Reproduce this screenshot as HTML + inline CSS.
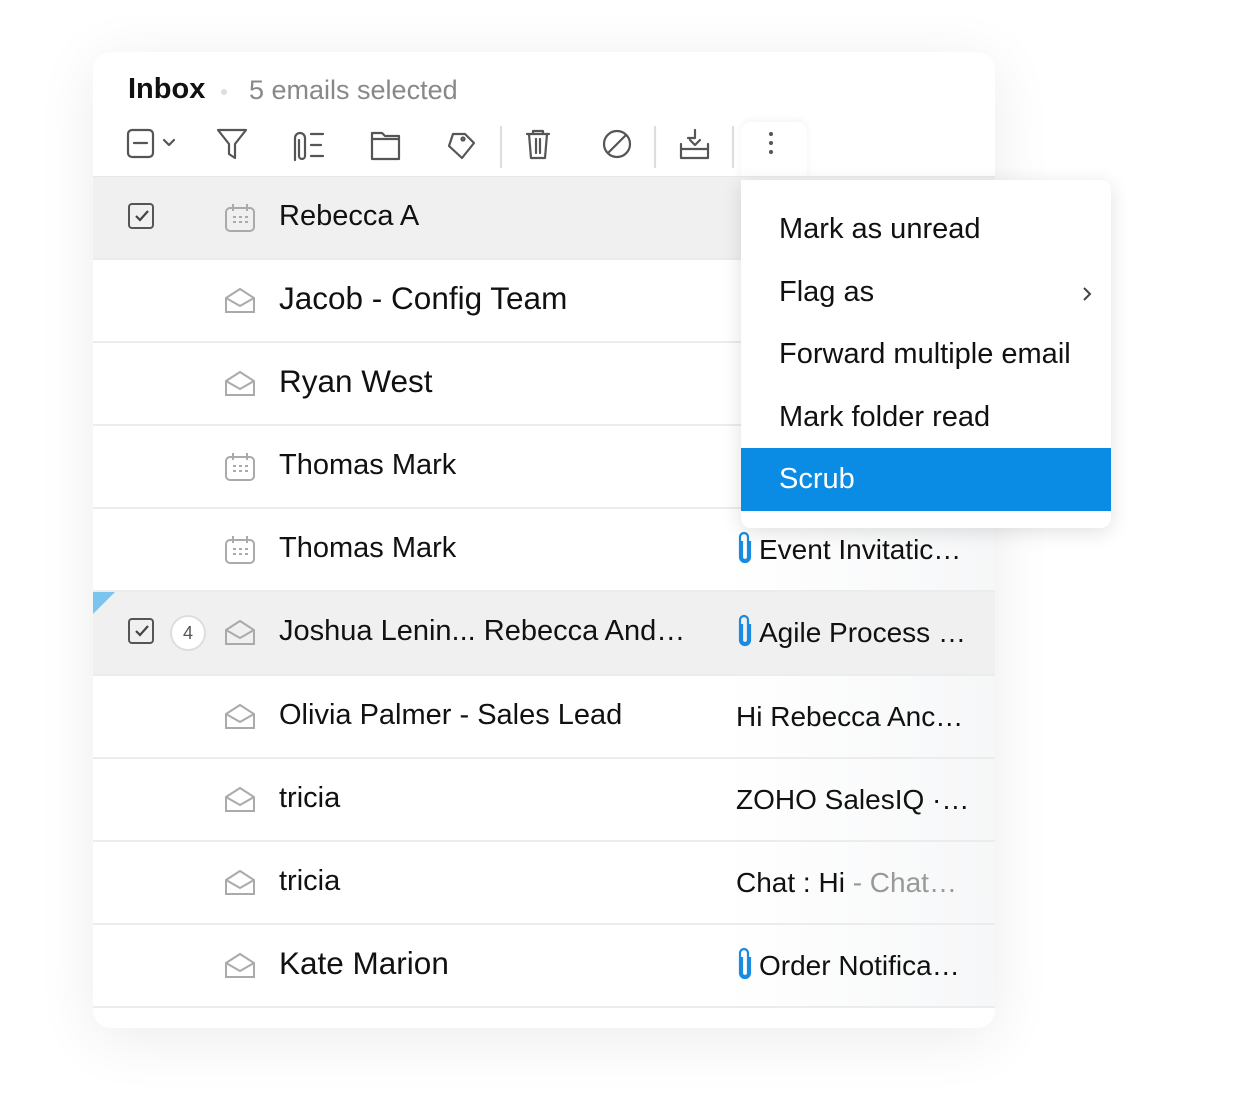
<!DOCTYPE html>
<html><head><meta charset="utf-8"><style>
*{margin:0;padding:0;box-sizing:border-box}
body{width:1237px;height:1096px;background:#fff;font-family:"Liberation Sans",sans-serif;position:relative;overflow:hidden}
.card{position:absolute;left:93px;top:52px;width:902px;height:976px;background:#fff;border-radius:18px;box-shadow:0 10px 60px rgba(0,0,0,.08);overflow:hidden}
.a{position:absolute}
.row{position:absolute;left:0;width:902px;height:83px;border-bottom:2px solid #ececec;background:linear-gradient(90deg,#fff 70%,#f6f7f8)}
.row.sel{background:#f0f0f0}
.name{position:absolute;left:186px;top:23px;font-size:29px;color:#111;white-space:nowrap}
.subj{position:absolute;left:643px;top:25px;font-size:28px;color:#111;white-space:nowrap}
.ic{position:absolute;left:131px;top:26px}
.cb{position:absolute;left:35px;top:26px;width:26px;height:26px;border:2px solid #555;border-radius:4px}
.menu{position:absolute;left:741px;top:180px;width:370px;height:348px;background:#fff;border-radius:0 10px 10px 10px;box-shadow:0 4px 20px rgba(0,0,0,.12)}
.mi{position:absolute;left:38px;font-size:29px;color:#111}
.big{font-size:31.5px;top:20px}
</style></head><body>
<div class="card">
<div class="a" style="left:35px;top:21px;font-size:29px;font-weight:bold;color:#111">Inbox</div>
<div class="a" style="left:128px;top:37px;width:6px;height:6px;border-radius:3px;background:#ddd"></div>
<div class="a" style="left:156px;top:23px;font-size:27px;color:#888">5 emails selected</div>
<svg class="a" style="left:30px;top:72px" width="700" height="44" fill="none" stroke="#555" stroke-width="2.2" stroke-linecap="round" stroke-linejoin="round">
<rect x="5" y="6" width="25" height="27" rx="4"/><path d="M11 19h13M41 16l5 5 5-5"/>
<path d="M95 6h28l-11 14v14l-6-4v-10z"/>
<path d="M172 36V14a5 5 0 0 1 10 0v18a3 3 0 0 1-6 0V16M188 10h12M188 21h10M188 32h12"/>
<path d="M249 9h10l3 3h14v23h-27z M249 15h27"/>
<path d="M330 10h12l9 9v0l-12 15-13-12z"/><circle cx="340" cy="15" r="1.5"/>
<path d="M378 3v40" stroke="#ddd"/>
<path d="M404 10h22M410 10v-3h10v3M406 10l2 24h14l2-24M413 15v14M417 15v14"/>
<circle cx="494" cy="20" r="13"/><path d="M485 29l18-18"/>
<path d="M532 3v40" stroke="#ddd"/>
<path d="M558 20v14h27v-14M558 25h27M565 14h7v-8M567 16l5 5 5-5" />
<path d="M610 3v40" stroke="#ddd"/>
</svg>
<div class="a" style="left:648px;top:70px;width:66px;height:60px;background:#fff;border-radius:10px 10px 0 0;box-shadow:0 -2px 8px rgba(0,0,0,.05)"></div>
<div class="a" style="left:676px;top:80px;width:4px;height:4px;background:#555;border-radius:2px;box-shadow:0 9px 0 #555,0 18px 0 #555"></div>
<div class="a" style="left:0;top:124px;width:902px;height:2px;background:#e8e8e8"></div>

<div class="row sel" style="top:125px"><div class="cb"></div><svg class="a" style="left:41px;top:32px" width="16" height="14"><path d="M2 7l4 4 8-9" stroke="#444" stroke-width="2.2" fill="none"/></svg>
<svg class="ic" width="32" height="30" fill="none" stroke="#aaa" stroke-width="2"><rect x="2" y="5" width="28" height="23" rx="4"/><path d="M9 1v7M23 1v7M9 14h3M15 14h3M21 14h3M9 19h3M15 19h3M21 19h3"/></svg><div class="name">Rebecca A</div></div>

<div class="row" style="top:208px"><svg class="ic" width="32" height="30" fill="none" stroke="#aaa" stroke-width="2"><path d="M2 12L16 3l14 9v14H2z M2 12l14 8 14-8"/></svg><div class="name big">Jacob - Config Team</div></div>
<div class="row" style="top:291px"><svg class="ic" width="32" height="30" fill="none" stroke="#aaa" stroke-width="2"><path d="M2 12L16 3l14 9v14H2z M2 12l14 8 14-8"/></svg><div class="name big">Ryan West</div></div>
<div class="row" style="top:374px"><svg class="ic" width="32" height="30" fill="none" stroke="#aaa" stroke-width="2"><rect x="2" y="5" width="28" height="23" rx="4"/><path d="M9 1v7M23 1v7M9 14h3M15 14h3M21 14h3M9 19h3M15 19h3M21 19h3"/></svg><div class="name">Thomas Mark</div></div>
<div class="row" style="top:457px"><svg class="ic" width="32" height="30" fill="none" stroke="#aaa" stroke-width="2"><rect x="2" y="5" width="28" height="23" rx="4"/><path d="M9 1v7M23 1v7M9 14h3M15 14h3M21 14h3M9 19h3M15 19h3M21 19h3"/></svg><div class="name">Thomas Mark</div>
<svg class="a" style="left:644px;top:22px" width="16" height="34" fill="none" stroke="#1a8be0" stroke-width="2.2"><path d="M5 10v16a3 3 0 0 0 6 0V6a4 4 0 0 0-8 0v20a5 5 0 0 0 10 0V10"/></svg><div class="subj" style="left:666px">Event Invitatic…</div></div>

<div class="row sel" style="top:540px;height:84px"><div class="a" style="left:0;top:0;width:0;height:0;border-top:22px solid #7cc4f0;border-right:22px solid transparent"></div>
<div class="cb"></div><svg class="a" style="left:41px;top:32px" width="16" height="14"><path d="M2 7l4 4 8-9" stroke="#444" stroke-width="2.2" fill="none"/></svg>
<div class="a" style="left:77px;top:23px;width:36px;height:36px;border:2px solid #ddd;border-radius:18px;background:#fff;text-align:center;line-height:32px;font-size:18px;color:#555">4</div>
<svg class="ic" width="32" height="30" fill="none" stroke="#aaa" stroke-width="2"><path d="M2 12L16 3l14 9v14H2z M2 12l14 8 14-8"/></svg><div class="name">Joshua Lenin... Rebecca And…</div>
<svg class="a" style="left:644px;top:22px" width="16" height="34" fill="none" stroke="#1a8be0" stroke-width="2.2"><path d="M5 10v16a3 3 0 0 0 6 0V6a4 4 0 0 0-8 0v20a5 5 0 0 0 10 0V10"/></svg><div class="subj" style="left:666px">Agile Process …</div></div>

<div class="row" style="top:624px"><svg class="ic" width="32" height="30" fill="none" stroke="#aaa" stroke-width="2"><path d="M2 12L16 3l14 9v14H2z M2 12l14 8 14-8"/></svg><div class="name">Olivia Palmer - Sales Lead</div><div class="subj">Hi Rebecca Anc…</div></div>
<div class="row" style="top:707px"><svg class="ic" width="32" height="30" fill="none" stroke="#aaa" stroke-width="2"><path d="M2 12L16 3l14 9v14H2z M2 12l14 8 14-8"/></svg><div class="name">tricia</div><div class="subj">ZOHO SalesIQ ·…</div></div>
<div class="row" style="top:790px"><svg class="ic" width="32" height="30" fill="none" stroke="#aaa" stroke-width="2"><path d="M2 12L16 3l14 9v14H2z M2 12l14 8 14-8"/></svg><div class="name">tricia</div><div class="subj">Chat : Hi <span style="color:#999">- Chat…</span></div></div>
<div class="row" style="top:873px"><svg class="ic" width="32" height="30" fill="none" stroke="#aaa" stroke-width="2"><path d="M2 12L16 3l14 9v14H2z M2 12l14 8 14-8"/></svg><div class="name big">Kate Marion</div>
<svg class="a" style="left:644px;top:22px" width="16" height="34" fill="none" stroke="#1a8be0" stroke-width="2.2"><path d="M5 10v16a3 3 0 0 0 6 0V6a4 4 0 0 0-8 0v20a5 5 0 0 0 10 0V10"/></svg><div class="subj" style="left:666px">Order Notifica…</div></div>
</div>

<div class="menu">
<div class="mi" style="top:33px">Mark as unread</div>
<div class="mi" style="top:96px">Flag as</div>
<svg class="a" style="left:340px;top:105px" width="12" height="18" fill="none" stroke="#444" stroke-width="2"><path d="M3 3l6 6-6 6"/></svg>
<div class="mi" style="top:158px">Forward multiple email</div>
<div class="mi" style="top:221px">Mark folder read</div>
<div class="a" style="left:0;top:268px;width:370px;height:63px;background:#0a8be4"></div>
<div class="mi" style="top:283px;color:#fff">Scrub</div>
</div>
</body></html>
